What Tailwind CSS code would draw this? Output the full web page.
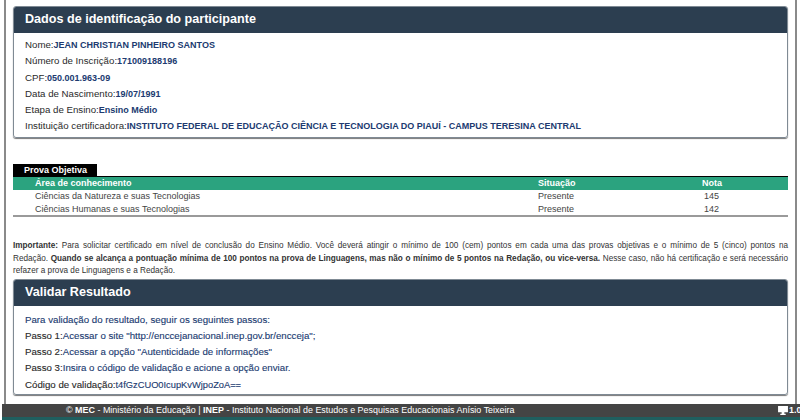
<!DOCTYPE html>
<html lang="pt-BR"><head><meta charset="utf-8"><script src="https://cdn.jsdelivr.net/npm/@tailwindcss/browser@4"></script></head>
<body class="m-0 bg-white">
<div class="w-[800px] h-[420px] overflow-hidden flex flex-col font-['Liberation_Sans',Arial,sans-serif] relative">
  <div class="h-[404px] ml-[4px] w-[793px] border-x-2 border-[#8a8a8a] pl-[7px] pt-[6px] shrink-0">
    <section class="w-[775px] h-[132px] border border-[#7f8a94] rounded-[3px] shadow-[0_1px_1px_#777] overflow-hidden">
      <h2 class="h-[26px] bg-[#2c3e50] text-white text-[12.6px] font-bold pl-[11px] leading-[24px]">Dados de identificação do participante</h2>
      <div class="pl-[11px] pt-[4px] text-[9.7px] leading-[16.3px] text-[#2a2a2a]">
        <p>Nome:<b class="text-[9px] text-[#203a70]">JEAN CHRISTIAN PINHEIRO SANTOS</b></p>
        <p>Número de Inscrição:<b class="text-[9px] text-[#203a70]">171009188196</b></p>
        <p>CPF:<b class="text-[9px] text-[#203a70]">050.001.963-09</b></p>
        <p>Data de Nascimento:<b class="text-[9px] text-[#203a70]">19/07/1991</b></p>
        <p>Etapa de Ensino:<b class="text-[9px] text-[#203a70]">Ensino Médio</b></p>
        <p>Instituição certificadora:<b class="text-[9px] text-[#203a70]">INSTITUTO FEDERAL DE EDUCAÇÃO CIÊNCIA E TECNOLOGIA DO PIAUÍ - CAMPUS TERESINA CENTRAL</b></p>
      </div>
    </section>
    <div class="mt-[26px] w-[84px] h-[12px] bg-black text-white text-[9px] font-bold leading-[13px] pl-[11px]">Prova Objetiva</div>
    <div class="w-[775px] border-t-[1px] border-b-[2px] border-t-black border-b-[#9a9a9a] text-[9px] text-[#444]">
      <div class="h-[13px] bg-[#2ba37f] text-white font-bold leading-[13px] grid grid-cols-[525px_163px_87px]">
        <span class="pl-[22px]">Área de conhecimento</span><span>Situação</span><span class="pl-[1px]">Nota</span>
      </div>
      <div class="h-[13px] leading-[13px] grid grid-cols-[525px_163px_87px]">
        <span class="pl-[22px]">Ciências da Natureza e suas Tecnologias</span><span>Presente</span><span class="pl-[3px]">145</span>
      </div>
      <div class="h-[12px] leading-[13px] grid grid-cols-[525px_163px_87px]">
        <span class="pl-[22px]">Ciências Humanas e suas Tecnologias</span><span>Presente</span><span class="pl-[3px]">142</span>
      </div>
    </div>
    <div class="mt-[23px] w-[775px] text-[8.2px] leading-[12.5px] text-[#333]">
      <p class="text-justify [text-align-last:justify]"><b>Importante:</b> Para solicitar certificado em nível de conclusão do Ensino Médio. Você deverá atingir o mínimo de 100 (cem) pontos em cada uma das provas objetivas e o mínimo de 5 (cinco) pontos na</p>
      <p class="text-justify [text-align-last:justify]">Redação. <b>Quando se alcança a pontuação mínima de 100 pontos na prova de Linguagens, mas não o mínimo de 5 pontos na Redação, ou vice-versa.</b> Nesse caso, não há certificação e será necessário</p>
      <p>refazer a prova de Linguagens e a Redação.</p>
    </div>
    <section class="mt-[1px] w-[775px] h-[116px] border border-[#7f8a94] rounded-[3px] shadow-[0_1px_1px_#777] overflow-hidden">
      <h2 class="h-[26px] bg-[#2c3e50] text-white text-[12.6px] font-bold pl-[11px] leading-[24px]">Validar Resultado</h2>
      <div class="pl-[11px] pt-[6px] text-[9.7px] leading-[16.3px] text-[#203a70] [-webkit-text-stroke:0.12px]">
        <p>Para validação do resultado, seguir os seguintes passos:</p>
        <p><span class="text-[#2a2a2a]">Passo 1:</span>Acessar o site "http://enccejanacional.inep.gov.br/encceja";</p>
        <p><span class="text-[#2a2a2a]">Passo 2:</span>Acessar a opção "Autenticidade de informações"</p>
        <p><span class="text-[#2a2a2a]">Passo 3:</span>Insira o código de validação e acione a opção enviar.</p>
        <p><span class="text-[#2a2a2a]">Código de validação:</span><span class="text-[9.3px]">t4fGzCUO0IcupKvWjpoZoA==</span></p>
      </div>
    </section>
  </div>
  <footer class="h-[13px] ml-[2px] bg-[#444] text-white text-[8.95px] leading-[13px] relative shrink-0">
    <div class="absolute left-[64px] top-0 whitespace-nowrap">© <b>MEC</b> - Ministério da Educação | <b>INEP</b> - Instituto Nacional de Estudos e Pesquisas Educacionais Anísio Teixeira</div>
    <div class="absolute left-[776px] top-0 flex items-center h-[13px] gap-[1px] font-bold whitespace-nowrap">
      <svg width="10" height="9" viewBox="0 0 11 10"><path d="M0 0h11v7H7v1.5h1.5V10h-6V8.5H4V7H0z" fill="#fff"/></svg><span>1.0</span>
    </div>
  </footer>
  <div class="h-[3px] ml-[2px] bg-[#1f5f5f] shrink-0"></div>
</div>
</body></html>
